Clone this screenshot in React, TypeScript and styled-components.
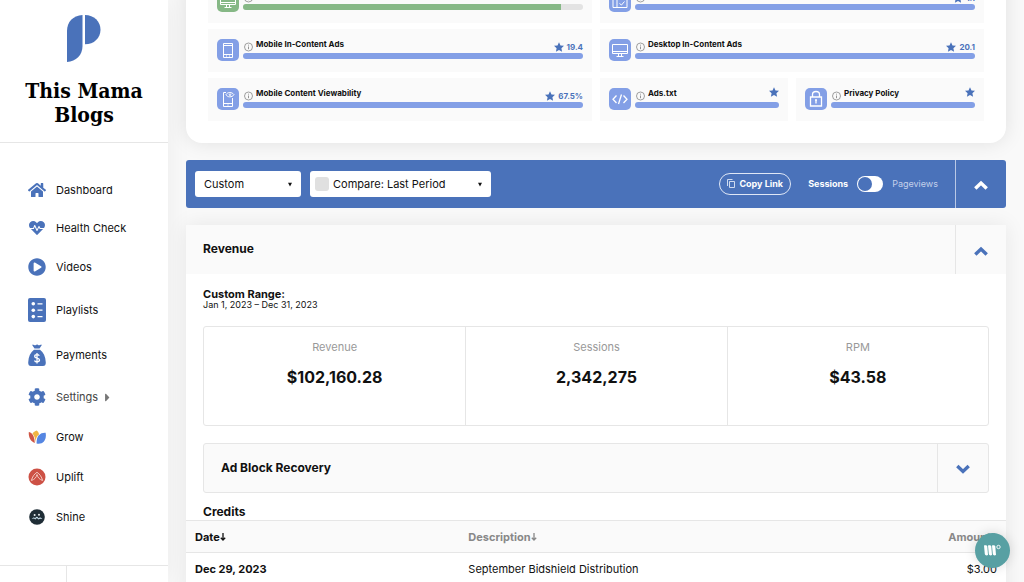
import React from "react";
import styled, { createGlobalStyle } from "styled-components";
import { FaHome, FaHeartbeat, FaPlayCircle, FaCog, FaCaretRight } from "react-icons/fa";

const blue = "#4a72ba";
const line = "#e6e6e6";

const GlobalStyle = createGlobalStyle`
  *, *::before, *::after { box-sizing: border-box; }
  body {
    margin: 0;
    background: #f9f9f9;
    color: #111;
    font-family: Inter, "Liberation Sans", sans-serif;
    font-size: 11px;
    line-height: 16px;
  }
  button, select, input { font: inherit; color: inherit; margin: 0; }
  h1, h2, h3, p, dl, dd, ul { margin: 0; padding: 0; }
`;

const Page = styled.div`
  display: flex;
  height: 100vh;
  overflow: hidden;
`;

/* ---------- Sidebar ---------- */

const Sidebar = styled.aside`
  display: flex;
  flex-direction: column;
  flex: 0 0 168px;
  background: #fff;
  box-shadow: 0 0 24px rgba(0, 0, 0, 0.06);
`;

const Brand = styled.header`
  display: flex;
  flex-direction: column;
  align-items: center;
  gap: 17px;
  padding: 15px 16px;
  border-bottom: 1px solid ${line};
`;

const SiteName = styled.h1`
  font-family: "DejaVu Serif Condensed", "DejaVu Serif", serif;
  font-size: 21px;
  font-weight: 700;
  line-height: 24px;
  text-align: center;
  color: #000;
`;

const Nav = styled.nav`
  display: flex;
  flex-direction: column;
  flex: 1;
  gap: 22px;
  padding: 39px 16px 0 28px;
`;

const NavLink = styled.a<{ $height: number; $muted?: boolean }>`
  display: flex;
  align-items: center;
  gap: 10px;
  height: ${(p) => p.$height}px;
  color: ${(p) => (p.$muted ? "#444" : "#111")};
  text-decoration: none;
  white-space: nowrap;

  > svg:first-child {
    flex: none;
    width: 18px;
    height: ${(p) => p.$height}px;
    color: ${blue};
  }
`;

const NavLabel = styled.span`
  display: flex;
  align-items: center;
  gap: 3px;
  svg { color: #777; }
`;

const SidebarFooter = styled.footer`
  display: grid;
  grid-template-columns: 2fr 3fr;
  height: 17px;
  border-top: 1px solid ${line};
  span { border-right: 1px solid ${line}; }
`;

/* ---------- Main column ---------- */

const Main = styled.main`
  flex: 1;
  min-width: 0;
  display: flex;
  flex-direction: column;
  gap: 17px;
  padding: 0 18px;
  overflow: hidden;
`;

const HealthCard = styled.section`
  flex: none;
  display: grid;
  grid-template-columns: repeat(4, 1fr);
  gap: 6px 8px;
  margin-top: -42px;
  padding: 22px;
  background: #fff;
  border-radius: 16px;
  box-shadow: 0 0 20px rgba(0, 0, 0, 0.1);
`;

const Tile = styled.article<{ $span: number }>`
  grid-column: span ${(p) => p.$span};
  display: flex;
  gap: 4px;
  height: 43px;
  padding: 10px 9px;
  background: #fafafa;
`;

const TileIcon = styled.span<{ $color: string }>`
  flex: none;
  width: 22px;
  height: 22px;
  border-radius: 5px;
  background: ${(p) => p.$color};
  svg { display: block; }
`;

const TileBody = styled.div`
  flex: 1;
  min-width: 0;
`;

const TileHead = styled.div`
  display: flex;
  align-items: flex-end;
  gap: 3px;
  height: 14px;
  font-size: 8px;
  font-weight: 700;
`;

const InfoIcon = styled.svg`
  flex: none;
  width: 10px;
  height: 12px;
`;

const TileName = styled.h3`
  flex: 1;
  align-self: flex-start;
  font-size: 8px;
  font-weight: 700;
  line-height: 10px;
`;

const Score = styled.span<{ $top?: boolean }>`
  display: flex;
  align-items: center;
  align-self: ${(p) => (p.$top ? "flex-start" : "flex-end")};
  gap: 3px;
  line-height: 12px;
  height: ${(p) => (p.$top ? 8 : 12)}px;
  color: ${blue};
`;

const Track = styled.div`
  height: 6px;
  border-radius: 3px;
  background: #e3e3e3;
  overflow: hidden;
`;

const Fill = styled.div<{ $color: string }>`
  height: 100%;
  background: ${(p) => p.$color};
`;

const FilterBar = styled.section`
  flex: none;
  display: flex;
  align-items: center;
  height: 48px;
  padding-left: 9px;
  border-radius: 3px;
  background: ${blue};
  color: #fff;
`;

const Filters = styled.div`
  display: flex;
  flex: 1;
  gap: 9px;
`;

const SelectBox = styled.div<{ $width: number }>`
  display: flex;
  align-items: center;
  width: ${(p) => p.$width}px;
  height: 26px;
  padding: 0 9px 0 5px;
  border-radius: 3px;
  background: #fff;
  color: #111;
`;

const Select = styled.select`
  flex: 1;
  min-width: 0;
  padding: 0 0 0 4px;
  border: 0;
  background: transparent;
  appearance: none;
  outline: 0;
`;

const CompareCheck = styled.input`
  appearance: none;
  width: 14px;
  height: 14px;
  border-radius: 3px;
  background: #e0e0e0;
`;

const CopyButton = styled.button`
  display: flex;
  align-items: center;
  justify-content: center;
  gap: 4px;
  width: 72px;
  height: 22px;
  padding: 0;
  border: 1px solid #dfe7f6;
  border-radius: 11px;
  background: transparent;
  font-size: 9px;
  font-weight: 700;
  white-space: nowrap;
`;

const MetricSwitch = styled.label`
  display: flex;
  align-items: center;
  gap: 9px;
  padding: 0 17px;
  font-size: 9px;
`;

const Metric = styled.span<{ $active?: boolean }>`
  font-weight: ${(p) => (p.$active ? 700 : 400)};
  color: ${(p) => (p.$active ? "#fff" : "#c4d0ea")};
`;

const Toggle = styled.input`
  appearance: none;
  width: 26px;
  height: 16px;
  padding: 1px;
  border-radius: 8px;
  background: #fff;
  &::before {
    content: "";
    display: block;
    width: 14px;
    height: 14px;
    border-radius: 50%;
    background: ${blue};
  }
`;

const CollapseButton = styled.button<{ $line: string }>`
  display: flex;
  align-items: center;
  justify-content: center;
  align-self: stretch;
  width: 51px;
  padding: 2px 0 0;
  border: 0;
  border-left: 1px solid ${(p) => p.$line};
  background: transparent;
`;

const RevenueCard = styled.section`
  flex: none;
  background: #fff;
  min-height: 400px;
  box-shadow: 0 0 20px rgba(0, 0, 0, 0.08);
`;

const PanelHead = styled.header`
  display: flex;
  height: 49px;
  padding-left: 17px;
  background: #fafafa;
`;

const PanelTitle = styled.h2`
  flex: 1;
  font-size: 12px;
  font-weight: 700;
  line-height: 48px;
`;

const PanelBody = styled.div`
  padding: 14px 17px 0;
`;

const RangeLabel = styled.h3`
  font-size: 11px;
  font-weight: 700;
  line-height: 12px;
`;

const RangeValue = styled.p`
  font-size: 9px;
  line-height: 10px;
`;

const Stats = styled.dl`
  display: grid;
  grid-template-columns: repeat(3, 1fr);
  height: 100px;
  margin-top: 16px;
  border: 1px solid ${line};
  border-radius: 3px;
`;

const Stat = styled.div`
  padding-top: 12px;
  text-align: center;
  & + & { border-left: 1px solid ${line}; }
  dt { color: #999; line-height: 16px; }
  dd {
    padding-top: 11px;
    font-size: 16px;
    font-weight: 700;
    line-height: 22px;
  }
`;

const SubPanel = styled.section`
  display: flex;
  height: 50px;
  margin-top: 17px;
  padding-left: 17px;
  border: 1px solid ${line};
  border-radius: 3px;
  background: #fafafa;
`;

const CreditsTitle = styled.h2`
  padding: 11px 0 0;
  font-size: 12px;
  font-weight: 700;
  line-height: 16px;
`;

const Table = styled.table`
  width: 100%;
  table-layout: fixed;
  border-collapse: collapse;
  th, td { padding: 0 9px; text-align: left; }
  th:last-child, td:last-child { text-align: right; }
  thead th {
    height: 32px;
    background: #fafafa;
    border-top: 1px solid ${line};
    border-bottom: 1px solid ${line};
    font-size: 11px;
    font-weight: 700;
    color: #888;
  }
  thead th:first-child { color: #111; }
  tbody th, tbody td { height: 33px; }
`;

const WidgetButton = styled.button`
  position: fixed;
  z-index: 2;
  right: 14px;
  bottom: 14px;
  width: 35px;
  height: 35px;
  padding: 0;
  border: 0;
  border-radius: 50%;
  background: #58a0a3;
  box-shadow: 0 0 12px rgba(0, 0, 0, 0.14);
  svg { display: block; }
`;

/* ---------- Drawings ---------- */

const Logo = () => (
  <svg width="34" height="47" viewBox="0 0 34 47" fill={blue} aria-hidden="true">
    <path d="M0 47V16C0 7 6 0.500 15.500 0V31C15.500 40 9 46.500 0 47Z" />
    <path d="M18 0C27 0 33.500 6.500 33.500 14.700S27 29.300 18 29.300Z" />
  </svg>
);

const PlaylistIcon = () => (
  <svg viewBox="0 0 18 24" aria-hidden="true">
    <rect width="18" height="24" rx="2" fill="currentColor" />
    <g fill="#fff">
      <circle cx="5.300" cy="5.800" r="1.800" />
      <circle cx="5.300" cy="12.200" r="1.800" />
      <circle cx="5.300" cy="18.600" r="1.800" />
    </g>
    <path d="M9.500 5.800H14.500M9.500 12.200H14.500M9.500 18.600H14.500" stroke="#fff" strokeWidth="1.200" />
  </svg>
);

const MoneyBagIcon = () => (
  <svg viewBox="0 0 18 22" aria-hidden="true">
    <path
      d="M4 .8C5.500.2 6.500 1.600 7.500 1.200C8.500.6 9.500.2 10.500 1.200C11.500 1.600 12.500.2 14 .8L11.500 4.500H6.500ZM6 5.800H12C15.500 8.500 17.500 12.500 17.800 18.500C17.900 21 16.800 22 15 22H3C1.200 22 .1 21 .2 18.500C.5 12.500 2.500 8.500 6 5.800Z"
      fill="currentColor"
    />
    <path
      d="M11.300 11.800C10.800 10.900 9.900 10.700 9 10.700C7.700 10.700 6.700 11.300 6.700 12.400C6.700 14.800 11.500 13.500 11.500 16.100C11.500 17.300 10.400 17.900 9.100 17.900C7.900 17.900 6.900 17.400 6.500 16.400M9 9V19.600"
      fill="none"
      stroke="#fff"
      strokeWidth="1.300"
    />
  </svg>
);

const GrowIcon = () => (
  <svg viewBox="0 0 18 18" aria-hidden="true">
    <path d="M.8 4C4 4.500 6.500 8 6.800 15C2.500 13.500.3 9 .8 4Z" fill="#cf5645" />
    <path d="M4.500 5.500C5.500 4 7 3 8.600 2.500C10 3.500 11 5 11 6.500C8.500 8.500 7.600 11 7.600 14.500C7.300 10.500 6.500 8 4.500 5.500Z" fill="#f0b542" />
    <path d="M17.600 4.800C12 4.500 8.300 8 8.600 15.500C15 16.800 19 11.500 17.600 4.800Z" fill="#5586e2" />
  </svg>
);

const UpliftIcon = () => (
  <svg viewBox="0 0 18 18" aria-hidden="true">
    <circle cx="9" cy="9" r="8.500" fill="#cd5145" />
    <path
      d="M3.400 12.500C4.300 9 6.200 6 9 4.300C11.800 6 13.700 9 14.600 12.500M3.400 12.500C6.500 11.500 8.300 9.500 9 6.500C9.700 9.500 11.500 11.500 14.600 12.500"
      fill="none"
      stroke="#f2c8c0"
      strokeWidth="1"
      strokeLinejoin="round"
    />
  </svg>
);

const ShineIcon = () => (
  <svg viewBox="0 0 18 18" aria-hidden="true">
    <circle cx="9" cy="9" r="7.800" fill="#1f2d36" />
    <circle cx="6.600" cy="7" r="1" fill="#e8eef0" />
    <circle cx="11" cy="6.800" r="1" fill="#e8eef0" />
    <path d="M3.600 11C5 9 6.400 9 7.200 10.200C8 8.400 9.600 8.400 10.400 10.200C11.600 8.800 13.400 9.400 14.400 11L12 10.800L10.500 11.400L8.800 10L7.300 11.400L6 10.500Z" fill="#c4dbe8" />
  </svg>
);

type Glyph = "phone" | "monitor" | "view" | "code" | "lock" | "layout";

const glyphs: Record<Glyph, React.ReactNode> = {
  phone: <path d="M6.500 4.500H15.500V18.500H6.500ZM6.500 6.500H15.500M6.500 15.500H15.500M9 17H10M12 17H13" />,
  monitor: <path d="M3.500 5.500H18.500V14.500H3.500ZM3.500 12.500H18.500M9.500 14.500V17M12.500 14.500V17M7.500 17.500H14.500" />,
  view: (
    <path d="M9 4.500H6.500V18.500H15.500V10M6.500 15.500H15.500M10.500 17H11.500M9 6.700C10.500 3.800 15 3.800 17 6.700C15 9.600 10.500 9.600 9 6.700ZM12.200 6.700A.8.8 0 1 0 13.800 6.700A.8.8 0 1 0 12.200 6.700" />
  ),
  code: <path d="M7.500 7.500L4 11.300L7.500 15M14.500 7.500L18 11.300L14.500 15M12.500 6.500L9.500 16" strokeWidth="1.300" />,
  lock: (
    <path d="M5.500 9H16.500V18H5.500ZM7.500 9V6.500C7.500 2.500 14.500 2.500 14.500 6.500V9M11 12V15.500M10 12H12" strokeWidth="1.300" />
  ),
  layout: <path d="M4 4.500H18V17.500H4ZM8 4.500V17.500M10.500 13.500L12.500 15L15.500 11.500M10.500 9.500H17" />,
};

const TileGlyph = ({ kind }: { kind: Glyph }) => (
  <svg width="22" height="22" viewBox="0 0 22 22" fill="none" stroke="#fff" strokeWidth="1" aria-hidden="true">
    {glyphs[kind]}
  </svg>
);

const Info = () => (
  <InfoIcon viewBox="0 0 10 12" fill="none" stroke="#888" aria-hidden="true">
    <circle cx="5.500" cy="6" r="4" strokeWidth=".8" />
    <path d="M5.500 5.500V8.200M5.500 3.700V4.600" strokeWidth=".9" />
  </InfoIcon>
);

const Star = () => (
  <svg width="10" height="10" viewBox="0 0 10 10" fill={blue} aria-hidden="true">
    <path d="M5 .2L6.500 3.400L10 3.800L7.400 6.200L8.100 9.700L5 8L1.900 9.700L2.600 6.200L0 3.800L3.500 3.400Z" />
  </svg>
);

const Chevron = ({ color, down }: { color: string; down?: boolean }) => (
  <svg width="16" height="12" viewBox="0 0 16 12" fill="none" stroke={color} strokeWidth="3.400" aria-hidden="true">
    <path d={down ? "M2.300 3L8 8.500L13.700 3" : "M2.300 9.500L8 4L13.700 9.500"} />
  </svg>
);

const Caret = () => (
  <svg width="4" height="5" viewBox="0 0 4 5" aria-hidden="true">
    <path d="M0 .8H4L2 4.500Z" fill="#111" />
  </svg>
);

const CopyIcon = () => (
  <svg width="8" height="10" viewBox="0 0 8 10" fill="none" stroke="#dfe7f6" strokeWidth=".9" aria-hidden="true">
    <path d="M2.500 2.500H7.500V8.500H2.500ZM.5 7V.5H5.500" />
  </svg>
);

const SortArrow = () => (
  <svg width="6" height="8" viewBox="0 0 6 8" fill="none" stroke="currentColor" strokeWidth="1.300" aria-hidden="true">
    <path d="M3 0V7M.8 4.800L3 7L5.200 4.800" />
  </svg>
);

/* ---------- Data ---------- */

const navItems: { label: string; icon: React.ReactNode; height: number; submenu?: boolean }[] = [
  { label: "Dashboard", icon: <FaHome />, height: 16 },
  { label: "Health Check", icon: <FaHeartbeat />, height: 16 },
  { label: "Videos", icon: <FaPlayCircle />, height: 18 },
  { label: "Playlists", icon: <PlaylistIcon />, height: 24 },
  { label: "Payments", icon: <MoneyBagIcon />, height: 22 },
  { label: "Settings", icon: <FaCog />, height: 18, submenu: true },
  { label: "Grow", icon: <GrowIcon />, height: 18 },
  { label: "Uplift", icon: <UpliftIcon />, height: 18 },
  { label: "Shine", icon: <ShineIcon />, height: 18 },
];

const green = "#86b886";
const periwinkle = "#839fe6";

const tiles: { name?: string; glyph: Glyph; score?: string; span: number; color: string; percent: number }[] = [
  { glyph: "monitor", span: 2, color: green, percent: 93.5 },
  { glyph: "layout", score: "1.1", span: 2, color: periwinkle, percent: 100 },
  { name: "Mobile In-Content Ads", glyph: "phone", score: "19.4", span: 2, color: periwinkle, percent: 100 },
  { name: "Desktop In-Content Ads", glyph: "monitor", score: "20.1", span: 2, color: periwinkle, percent: 100 },
  { name: "Mobile Content Viewability", glyph: "view", score: "67.5%", span: 2, color: periwinkle, percent: 100 },
  { name: "Ads.txt", glyph: "code", span: 1, color: periwinkle, percent: 100 },
  { name: "Privacy Policy", glyph: "lock", span: 1, color: periwinkle, percent: 100 },
];

const stats = [
  ["Revenue", "$102,160.28"],
  ["Sessions", "2,342,275"],
  ["RPM", "$43.58"],
];

export default function App() {
  return (
    <Page>
      <GlobalStyle />
      <Sidebar>
        <Brand>
          <Logo />
          <SiteName>This Mama Blogs</SiteName>
        </Brand>
        <Nav aria-label="Main">
          {navItems.map((item) => (
            <NavLink key={item.label} href="#" $height={item.height} $muted={item.submenu}>
              {item.icon}
              <NavLabel>
                {item.label}
                {item.submenu && <FaCaretRight size={13} />}
              </NavLabel>
            </NavLink>
          ))}
        </Nav>
        <SidebarFooter>
          <span />
        </SidebarFooter>
      </Sidebar>

      <Main>
        <HealthCard aria-label="Health checks">
          {tiles.map((tile, index) => (
            <Tile key={index} $span={tile.span}>
              <TileIcon $color={tile.color}>
                <TileGlyph kind={tile.glyph} />
              </TileIcon>
              <TileBody>
                <TileHead>
                  <Info />
                  <TileName>{tile.name}</TileName>
                  {tile.color !== green && (
                    <Score $top={!tile.score}>
                      <Star />
                      {tile.score}
                    </Score>
                  )}
                </TileHead>
                <Track>
                  <Fill $color={tile.color} style={{ width: `${tile.percent}%` }} />
                </Track>
              </TileBody>
            </Tile>
          ))}
        </HealthCard>

        <FilterBar aria-label="Report filters">
          <Filters>
            <SelectBox $width={106}>
              <Select aria-label="Date range">
                <option>Custom</option>
              </Select>
              <Caret />
            </SelectBox>
            <SelectBox $width={181}>
              <CompareCheck type="checkbox" aria-label="Compare periods" />
              <Select aria-label="Comparison period">
                <option>Compare: Last Period</option>
              </Select>
              <Caret />
            </SelectBox>
          </Filters>
          <CopyButton type="button">
            <CopyIcon />
            Copy Link
          </CopyButton>
          <MetricSwitch>
            <Metric $active>Sessions</Metric>
            <Toggle type="checkbox" role="switch" />
            <Metric>Pageviews</Metric>
          </MetricSwitch>
          <CollapseButton type="button" $line="#b9c8e6" aria-label="Collapse filters">
            <Chevron color="#fff" />
          </CollapseButton>
        </FilterBar>

        <RevenueCard>
          <PanelHead>
            <PanelTitle>Revenue</PanelTitle>
            <CollapseButton type="button" $line={line} aria-label="Collapse revenue">
              <Chevron color={blue} />
            </CollapseButton>
          </PanelHead>
          <PanelBody>
            <RangeLabel>Custom Range:</RangeLabel>
            <RangeValue>Jan 1, 2023 – Dec 31, 2023</RangeValue>
            <Stats>
              {stats.map(([label, value]) => (
                <Stat key={label}>
                  <dt>{label}</dt>
                  <dd>{value}</dd>
                </Stat>
              ))}
            </Stats>
            <SubPanel>
              <PanelTitle>Ad Block Recovery</PanelTitle>
              <CollapseButton type="button" $line={line} aria-label="Expand ad block recovery">
                <Chevron color={blue} down />
              </CollapseButton>
            </SubPanel>
            <CreditsTitle>Credits</CreditsTitle>
          </PanelBody>
          <Table>
            <thead>
              <tr>
                <th scope="col">Date<SortArrow /></th>
                <th scope="col">Description<SortArrow /></th>
                <th scope="col">Amount<SortArrow /></th>
              </tr>
            </thead>
            <tbody>
              <tr>
                <th scope="row">Dec 29, 2023</th>
                <td>September Bidshield Distribution</td>
                <td>$3.00</td>
              </tr>
            </tbody>
          </Table>
        </RevenueCard>
      </Main>

      <WidgetButton type="button" aria-label="Open widget">
        <svg width="35" height="35" viewBox="0 0 35 35" fill="#fff" aria-hidden="true">
          <path d="M9 12.500C10.500 11.800 12 12.200 12.300 13.500L13 22C11.500 22.800 10 22.300 9.800 21Z" />
          <path d="M13 12.500C14.500 11.800 16 12.200 16.300 13.500L17 22C15.500 22.800 14 22.300 13.800 21Z" />
          <path d="M17 12.500C18.500 11.800 20 12.200 20.300 13.500L21 22C19.500 22.800 18 22.300 17.800 21Z" />
          <circle cx="23.500" cy="14" r="1.700" fill="none" stroke="#fff" strokeWidth=".9" />
        </svg>
      </WidgetButton>
    </Page>
  );
}
